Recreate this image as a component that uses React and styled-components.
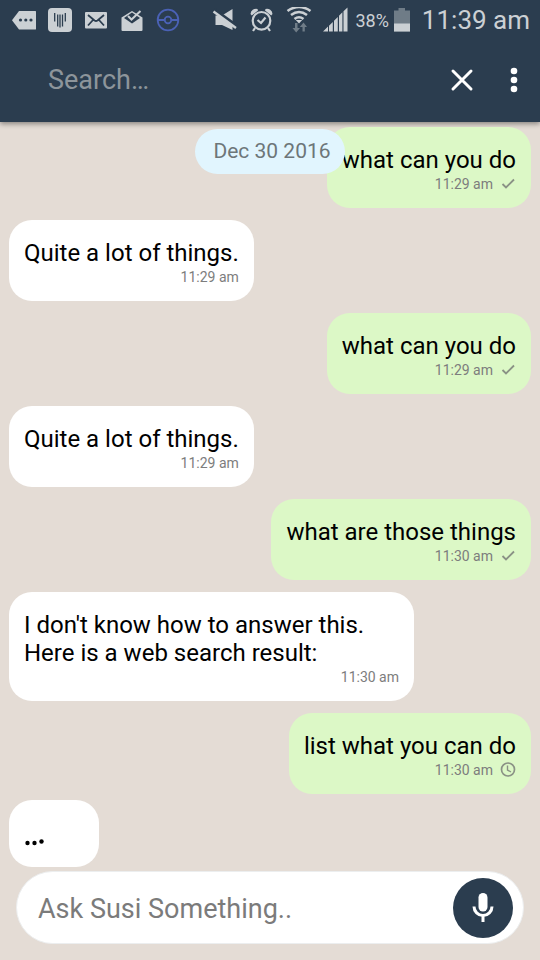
import React from "react";
import styled, { createGlobalStyle } from "styled-components";

const GlobalStyle = createGlobalStyle`
  *, *::before, *::after { box-sizing: border-box; }
  body {
    margin: 0;
    background: #e4dcd5;
    font-family: Roboto, "Noto Sans", sans-serif;
  }
`;

const Screen = styled.div`
  min-height: 100vh;
  display: flex;
  flex-direction: column;
`;

const Header = styled.header`
  position: relative;
  padding-bottom: 2px;
  background: #2b3d4f;
  box-shadow: 0 2px 5px rgba(0, 0, 0, 0.4);
`;

const StatusBar = styled.div`
  display: flex;
  align-items: center;
  justify-content: space-between;
  height: 40px;
  padding: 0 10px 0 12px;
  color: #cbd0d4;
`;

const StatusGroup = styled.div`
  display: flex;
  align-items: center;
  gap: ${({ $gap }) => $gap}px;
`;

const StatusIcon = styled.svg`
  display: block;
  flex: none;
  width: ${({ $width }) => $width || 24}px;
  height: 26px;
  fill: currentColor;
`;

const Battery = styled.span`
  display: flex;
  align-items: center;
  gap: 4px;
  margin-left: -5px;
  font-size: 18px;
`;

const Clock = styled.time`
  font-size: 26px;
  line-height: 40px;
`;

const SearchBar = styled.form`
  display: flex;
  align-items: center;
  height: 80px;
  padding: 0 8px 0 48px;
`;

const SearchInput = styled.input`
  flex: 1;
  min-width: 0;
  padding: 0;
  border: 0;
  outline: 0;
  background: transparent;
  color: #fff;
  font: 27px/32px Roboto, sans-serif;
  &::placeholder { color: #8d959b; opacity: 1; }
`;

const BarButton = styled.button`
  display: grid;
  place-items: center;
  width: ${({ $width }) => $width}px;
  height: 48px;
  padding: 0;
  border: 0;
  background: transparent;
  color: #fff;
`;

const Chat = styled.main`
  position: relative;
  flex: 1;
  padding: 5px 9px 4px;
`;

const DateRow = styled.div`
  position: absolute;
  top: 7px;
  left: 0;
  right: 0;
  display: flex;
  justify-content: center;
`;

const DateBadge = styled.time`
  padding: 0 14px 0 18px;
  border-radius: 23px;
  background: #e1f5fe;
  color: #6d7679;
  font-size: 21px;
  line-height: 45px;
`;

const MessageList = styled.ol`
  display: flex;
  flex-direction: column;
  gap: 12px;
  margin: 0;
  padding: 0;
  list-style: none;
`;

const Bubble = styled.li`
  align-self: ${({ $mine }) => ($mine ? "flex-end" : "flex-start")};
  max-width: 405px;
  padding: 19px 15px 15px;
  border-radius: 23px;
  background: ${({ $mine }) => ($mine ? "#dcf8c6" : "#fff")};
`;

const BubbleText = styled.p`
  margin: 0;
  color: #000;
  font-size: 24px;
  line-height: 28px;
`;

const Meta = styled.div`
  display: flex;
  align-items: center;
  justify-content: flex-end;
  gap: 7px;
  height: 18px;
  margin-top: 1px;
  color: #7d7d7d;
  font-size: 14px;
`;

const MetaIcon = styled.svg`
  display: block;
  width: 16px;
  height: 16px;
  fill: none;
  stroke: #8a9285;
`;

const TypingBubble = styled.li`
  display: flex;
  align-items: flex-end;
  align-self: flex-start;
  width: 90px;
  height: 67px;
  margin-top: -6px;
  padding: 0 15px 21px;
  border-radius: 23px;
  background: #fff;
`;

const Composer = styled.form`
  display: flex;
  align-items: center;
  height: 73px;
  margin: 0 16px 16px;
  padding: 0 10px 0 21px;
  border: 1px solid #eceeef;
  border-radius: 37px;
  background: #fff;
`;

const ComposerInput = styled.input`
  flex: 1;
  min-width: 0;
  padding: 2px 0 0;
  border: 0;
  outline: 0;
  background: transparent;
  color: #000;
  font: 27px/34px Roboto, sans-serif;
  &::placeholder { color: #7b7b7b; opacity: 1; }
`;

const MicButton = styled.button`
  display: grid;
  place-items: center;
  flex: none;
  width: 60px;
  height: 60px;
  padding: 0;
  border: 0;
  border-radius: 50%;
  background: #2b3d4f;
  color: #fff;
`;

const messages = [
  { mine: true, text: "what can you do", time: "11:29 am", status: "sent" },
  { text: "Quite a lot of things.", time: "11:29 am" },
  { mine: true, text: "what can you do", time: "11:29 am", status: "sent" },
  { text: "Quite a lot of things.", time: "11:29 am" },
  { mine: true, text: "what are those things", time: "11:30 am", status: "sent" },
  { text: "I don't know how to answer this. Here is a web search result:", time: "11:30 am" },
  { mine: true, text: "list what you can do", time: "11:30 am", status: "pending" },
];

function Notifications() {
  return (
    <StatusGroup $gap={12}>
      <StatusIcon viewBox="0 0 24 26" aria-hidden="true">
        <path d="M7 4H23Q24.500 4 24.500 5.500V21Q24.500 22.500 23 22.500H7L0 13.200Z" />
        <g fill="#2b3d4f"><circle cx="8.500" cy="13" r="1.600" /><circle cx="13.800" cy="13" r="1.600" /><circle cx="19" cy="13" r="1.600" /></g>
      </StatusIcon>
      <StatusIcon viewBox="0 0 24 26" aria-hidden="true">
        <rect y="1" width="24" height="24" rx="4" />
        <path d="M6.700 6V14.500M9.700 7.500V19.500M12 7.500V20.500M14.500 7.500V19.500M17.300 6V14.500" stroke="#2b3d4f" strokeWidth="1.300" />
      </StatusIcon>
      <StatusIcon viewBox="0 0 24 26" aria-hidden="true">
        <rect x="1" y="5" width="22" height="16.500" rx="1" />
        <path d="M4 8L10.500 13.500Q12 14.500 13.500 13.500L20 8M4 18.500L9 13M20 18.500L15 13" fill="none" stroke="#2b3d4f" strokeWidth="1.800" />
      </StatusIcon>
      <StatusIcon viewBox="0 0 24 26" aria-hidden="true">
        <path d="M1.500 10.500L12 4L22.500 10.500V23Q22.500 24 21.500 24H2.500Q1.500 24 1.500 23Z" />
        <path d="M4 11L12 5.500L20 11L12 16.500Z" fill="#2b3d4f" />
        <path d="M8 9L11.500 12.500L20.500 4" fill="none" stroke="currentColor" strokeWidth="2" />
      </StatusIcon>
      <StatusIcon viewBox="0 0 24 26" aria-hidden="true">
        <g fill="none" stroke="#4a61b5" strokeWidth="1.800"><circle cx="12" cy="13" r="10.300" /><circle cx="12" cy="13" r="3.300" /><path d="M1.700 13H8.700M15.300 13H22.300" /></g>
      </StatusIcon>
    </StatusGroup>
  );
}

function SystemStatus() {
  return (
    <StatusGroup $gap={11}>
      <StatusIcon $width={26} viewBox="0 0 26 26" aria-hidden="true">
        <path d="M3.500 8.500H10L20.500 2V23L10 18H3.500Z" />
        <path d="M2 3L25 19.500" stroke="#2b3d4f" strokeWidth="4" />
        <path d="M1.500 4.500L24 21" stroke="currentColor" strokeWidth="2.400" />
      </StatusIcon>
      <StatusIcon $width={26} viewBox="0 0 26 26" aria-hidden="true">
        <g fill="none" stroke="currentColor" strokeWidth="2.200"><circle cx="12.500" cy="13.800" r="8.800" /><path d="M8.500 13L12 16L16.500 10.500M6 21L4 24M19 21L21 24" /></g>
        <path d="M1.500 7A5.500 5.500 0 0 1 8.500 2L9 3.500L2.800 8.500ZM23.500 7A5.500 5.500 0 0 0 16.500 2L16 3.500L22.200 8.500Z" />
      </StatusIcon>
      <StatusIcon $width={26} viewBox="0 0 26 26" aria-hidden="true">
        <path d="M1.500 4Q13 -4 24.500 4M5 8Q13 2 21 8M8.500 12Q13 8.500 17.500 12" fill="none" stroke="currentColor" strokeWidth="2.600" />
        <path d="M9.800 13H16.200L13 16.500Z" />
        <path d="M9 16V21H6.500L10.200 25.500L14 21H11.500V16ZM16.500 24.500V20H13.800L17.500 15.500L21 20H18.800V24.500Z" fill="#6f7c87" />
      </StatusIcon>
      <StatusIcon $width={26} viewBox="0 0 26 26" aria-hidden="true">
        <path d="M0 24.500L5 19.500V24.500ZM6 18.700L9.800 14.900V24.500H6ZM11 13.700L14.800 9.900V24.500H11ZM16 8.700L19.400 5.300V24.500H16ZM20.500 4.200L24.500 .5V24.500H20.500Z" />
      </StatusIcon>
      <Battery>
        38%
        <StatusIcon $width={18} viewBox="0 0 18 26" role="img" aria-label="Battery">
          <path d="M1 3.500H5.500V1H12V3.500H17V24.500H1Z" fill="#6f7c87" />
          <path d="M1 16.500H17V24.500H1Z" />
        </StatusIcon>
      </Battery>
      <Clock>11:39 am</Clock>
    </StatusGroup>
  );
}

function DeliveryIcon({ status }) {
  return status === "sent" ? (
    <MetaIcon viewBox="0 0 16 16" role="img" aria-label="Sent">
      <path d="M2.500 8L6 11.500L14 3.500" strokeWidth="1.800" />
    </MetaIcon>
  ) : (
    <MetaIcon viewBox="0 0 16 16" role="img" aria-label="Pending">
      <circle cx="8" cy="7.500" r="6.500" strokeWidth="1.700" />
      <path d="M7.500 3.500V8L11 10" strokeWidth="1.400" />
    </MetaIcon>
  );
}

export default function App() {
  return (
    <Screen>
      <GlobalStyle />
      <Header>
        <StatusBar>
          <Notifications />
          <SystemStatus />
        </StatusBar>
        <SearchBar role="search">
          <SearchInput type="text" placeholder="Search…" aria-label="Search" />
          <BarButton type="button" $width={66} aria-label="Close search">
            <svg width="24" height="24" fill="none" stroke="currentColor" strokeWidth="3"><path d="M3 3L21 21M21 3L3 21" strokeLinecap="round" /></svg>
          </BarButton>
          <BarButton type="button" $width={37} aria-label="More options">
            <svg width="8" height="26" fill="currentColor"><circle cx="4" cy="4" r="3.300" /><circle cx="4" cy="13" r="3.300" /><circle cx="4" cy="22" r="3.300" /></svg>
          </BarButton>
        </SearchBar>
      </Header>
      <Chat>
        <MessageList>
          {messages.map((message, index) => (
            <Bubble key={index} $mine={message.mine}>
              <BubbleText>{message.text}</BubbleText>
              <Meta>
                <time>{message.time}</time>
                {message.status && <DeliveryIcon status={message.status} />}
              </Meta>
            </Bubble>
          ))}
          <TypingBubble>
            <svg width="22" height="10" role="img" aria-label="Susi is typing"><circle cx="3.500" cy="7" r="2.200" /><circle cx="10.500" cy="7" r="2.200" /><circle cx="17.500" cy="5.500" r="2.200" /></svg>
          </TypingBubble>
        </MessageList>
        <DateRow><DateBadge>Dec 30 2016</DateBadge></DateRow>
      </Chat>
      <Composer>
        <ComposerInput type="text" placeholder="Ask Susi Something.." aria-label="Message" />
        <MicButton type="button" aria-label="Voice input">
          <svg width="24" height="32" viewBox="0 0 24 32" fill="currentColor"><rect x="7.500" y="1" width="9" height="18.500" rx="4.500" /><path d="M3 14.500A9 9 0 0 0 21 14.500M12 23.500V30" fill="none" stroke="currentColor" strokeWidth="3" /></svg>
        </MicButton>
      </Composer>
    </Screen>
  );
}
